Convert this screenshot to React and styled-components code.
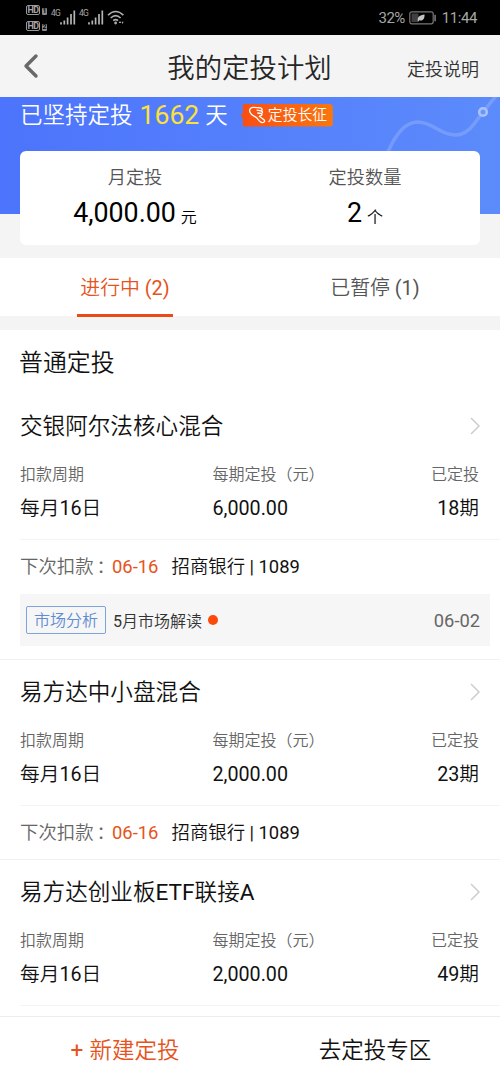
import React from "react";
import styled, { createGlobalStyle } from "styled-components";

const plans = [
    {
        name  : "交银阿尔法核心混合",
        amount: "6,000.00",
        count : "18期",
        next  : "06-16",
        news  : { tag: "市场分析", title: "5月市场解读", date: "06-02" }
    },
    {
        name  : "易方达中小盘混合",
        amount: "2,000.00",
        count : "23期",
        next  : "06-16"
    },
    {
        name  : "易方达创业板ETF联接A",
        amount: "2,000.00",
        count : "49期"
    }
];

export default function App() {

    return(
        <Page>
            <GlobalStyle/>
            <StatusBar/>

            <Header>
                <BackIcon viewBox="0 0 16 26">
                    <path d="M13 3 L3 13 L13 23"/>
                </BackIcon>
                <HeaderTitle>我的定投计划</HeaderTitle>
                <HeaderLink>定投说明</HeaderLink>
            </Header>

            <Summary/>

            <Tabs>
                <Tab><TabLabel $active>进行中 <Latin>(2)</Latin></TabLabel></Tab>
                <Tab><TabLabel>已暂停 <Latin>(1)</Latin></TabLabel></Tab>
            </Tabs>

            <PlanList>
                <SectionTitle>普通定投</SectionTitle>
                {plans.map(plan => <Plan key={plan.name} plan={plan}/>)}
            </PlanList>

            <BottomBar>
                <BottomButton $primary><Plus>+</Plus>新建定投</BottomButton>
                <BottomButton>去定投专区</BottomButton>
            </BottomBar>
        </Page>
    )
}

function StatusBar() {
    return(
        <StatusWrapper>
            <HdStack>
                <HdRow><HdBox>HD</HdBox><HdNumber>1</HdNumber></HdRow>
                <HdRow><HdBox>HD</HdBox><HdNumber>2</HdNumber></HdRow>
            </HdStack>
            <Signal/>
            <Signal/>
            <WifiIcon viewBox="0 0 18 15">
                <path d="M1 5.2 Q8.6 -2.2 16.4 5.2"/>
                <path d="M3.7 8 Q8.6 3.2 13.6 8"/>
                <path d="M6.2 10.7 Q8.6 8.4 11 10.7"/>
                <circle cx="8.6" cy="13" r="1.4"/>
                <path className="arrow" d="M13 11 l-1.3 2 h2.6z M15.6 14 l-1 -2.2 h2z"/>
            </WifiIcon>

            <StatusRight>
                <Percent>32%</Percent>
                <BatteryIcon viewBox="0 0 28 14">
                    <rect className="frame" x="0.8" y="0.8" width="23.4" height="12" rx="2"/>
                    <rect className="level" x="2.5" y="2.5" width="7" height="8.6"/>
                    <path className="leaf" d="M9 10.5 C7.5 6 11 4 15.5 3.4 C16 8 13 10.5 10.2 9.3 L8.6 11.2z"/>
                    <rect className="cap" x="25.3" y="3.8" width="1.6" height="6.5"/>
                </BatteryIcon>
                <Clock>11:44</Clock>
            </StatusRight>
        </StatusWrapper>
    )
}

function Signal() {
    return(
        <SignalWrapper>
            <SignalLabel>4G</SignalLabel>
            <SignalBars viewBox="0 0 16 15">
                <path d="M1 12.3 V14.5 M4.3 10.5 V14.5 M7.6 7.5 V14.5 M11 4 V14.5 M14.3 0.5 V14.5"/>
            </SignalBars>
        </SignalWrapper>
    )
}

function Summary() {
    return(
        <SummaryWrapper>
            <Wave viewBox="0 0 120 60">
                <path d="M8 55 C16 36 26 25 38 25 C53 25 60 38 75 38 C90 38 96 23 103 15 L116 -1"/>
                <circle cx="103" cy="15" r="3.8"/>
            </Wave>
            <Banner>
                已坚持定投
                <Days>1662</Days>
                天
                <Badge>
                    <ShoeIcon viewBox="0 0 19 18">
                        <path d="M2 6.2 C0.6 3 3.2 1 6.2 1.4 C8.5 1.8 10.5 1.2 12.6 1.9 C14.6 2.8 14.6 4.4 13.2 4.9 C15 5.6 15 7 13.3 7.5 C14.5 8.6 14 9.8 12.2 9.9 L11.3 10.3 L16.3 14 C17.3 16 15 17.3 12.9 16.2 C10.6 15 9.8 12.6 8 11.3 C6.2 10 3.2 9.3 2 6.2z"/>
                        <path d="M8.6 4.2 L13.2 4.9 M9.3 7 L13.3 7.5"/>
                    </ShoeIcon>
                    定投长征
                </Badge>
            </Banner>
            <SummaryCard>
                <Stat>
                    <StatLabel>月定投</StatLabel>
                    <StatValue>4,000.00<Unit>元</Unit></StatValue>
                </Stat>
                <Stat>
                    <StatLabel>定投数量</StatLabel>
                    <StatValue>2<Unit>个</Unit></StatValue>
                </Stat>
            </SummaryCard>
        </SummaryWrapper>
    )
}

/* digits and latin letters are one step heavier than the Chinese text */
function Mixed({ text }) {
    return text.split(/([\x21-\x7e]+)/).map((part, i) =>
        i % 2 ? <Latin key={i}>{part}</Latin> : part
    )
}

function Plan({ plan }) {
    return(
        <PlanWrapper>
            <PlanHead>
                <PlanName><Mixed text={plan.name}/></PlanName>
                <ChevronIcon viewBox="0 0 10 18">
                    <path d="M1 1 L9 9 L1 17"/>
                </ChevronIcon>
            </PlanHead>
            <PlanGrid>
                <Label>扣款周期</Label>
                <Label>每期定投（元）</Label>
                <Label $right>已定投</Label>
                <Value><Mixed text="每月16日"/></Value>
                <Value><Mixed text={plan.amount}/></Value>
                <Value $right><Mixed text={plan.count}/></Value>
            </PlanGrid>
            {plan.next &&
                <NextRow>
                    <NextLabel>下次扣款<Colon>：</Colon></NextLabel>
                    <NextDate>{plan.next}</NextDate>
                    <span><Mixed text="招商银行 | 1089"/></span>
                </NextRow>
            }
            {plan.news &&
                <News>
                    <NewsTag>{plan.news.tag}</NewsTag>
                    <span><Mixed text={plan.news.title}/></span>
                    <Dot/>
                    <NewsDate>{plan.news.date}</NewsDate>
                </News>
            }
        </PlanWrapper>
    )
}

const GlobalStyle = createGlobalStyle`
    * {
        box-sizing: border-box;
    }

    body {
        margin      : 0;
        background  : #F4F4F4;
        font-family : Roboto, "Noto Sans CJK SC", sans-serif;
        font-weight : 350;
    }
`;

const Page = styled.div`
    display         : flex;
    flex-direction  : column;
    width       : 500px;
    height      : 1083px;
    overflow    : hidden;
    background  : #F4F4F4;
    color       : #111;
    white-space : nowrap;
`;

const Latin = styled.span`
    font-weight: 400;
`;

const StatusWrapper = styled.div`
    display     : flex;
    align-items : center;
    flex        : none;
    height      : 35px;
    padding     : 0 23px 0 26px;
    background  : #000;
    color       : #A6A6A6;
    font-weight : 400;
`;

const HdStack = styled.div`
    display         : flex;
    flex-direction  : column;
    gap         : 6px;
    width       : 25px;
    margin-top  : 1px;
`;

const HdRow = styled.div`
    display     : flex;
    align-items : flex-end;
    gap         : 2px;
`;

const HdBox = styled.div`
    display     : flex;
    justify-content: center;
    width       : 14px;
    height      : 10px;
    border      : 1px solid #999;
    border-radius: 2px;
    font-size   : 9px;
    font-weight : 700;
    line-height : 8.5px;
    letter-spacing: -0.5px;
`;

const HdNumber = styled.div`
    width       : 5px;
    height      : 7px;
    border-radius: 1px;
    background  : #8A8A8A;
    color       : #000;
    font-size   : 7px;
    font-weight : 700;
    line-height : 7.5px;
    text-align  : center;
`;

const SignalWrapper = styled.div`
    display : flex;
    width   : 28px;
    height  : 15px;
`;

const SignalLabel = styled.div`
    width       : 9px;
    margin-top  : -1px;
    font-size   : 8.5px;
    line-height : 9px;
    letter-spacing: -0.7px;
`;

const SignalBars = styled.svg`
    width   : 16px;
    height  : 15px;

    path {
        stroke      : #B4B4B4;
        stroke-width: 1.7;
    }
`;

const WifiIcon = styled.svg`
    width   : 18px;
    height  : 15px;

    path {
        fill    : none;
        stroke  : #ADADAD;
        stroke-width: 1.6;
    }

    circle, .arrow {
        fill    : #ADADAD;
        stroke  : none;
    }
`;

const StatusRight = styled.div`
    display     : flex;
    align-items : center;
    margin-left : auto;
    font-size   : 15px;
    line-height : 20px;
`;

const Percent = styled.span`
    letter-spacing: -0.6px;
`;

const Clock = styled.span`
    letter-spacing: -0.4px;
`;

const BatteryIcon = styled.svg`
    width   : 28px;
    height  : 14px;
    margin  : 0 5px 0 4px;

    .frame {
        fill    : none;
        stroke  : #777;
        stroke-width: 1.2;
    }

    .level {
        fill: #3F3F3F;
    }

    .leaf {
        fill: #C4C4C4;
    }

    .cap {
        fill: #777;
    }
`;

const Header = styled.div`
    display     : grid;
    grid-template-columns: 98px 1fr 99px;
    align-items : center;
    flex        : none;
    height      : 62px;
    padding     : 0 21px 0 23px;
`;

const BackIcon = styled.svg`
    width   : 16px;
    height  : 26px;

    path {
        fill    : none;
        stroke  : #686868;
        stroke-width: 3.4;
        stroke-linecap: round;
        stroke-linejoin: round;
    }
`;

const HeaderTitle = styled.div`
    padding-top : 5px;
    padding-right: 2px;
    color       : #262626;
    font-size   : 27.4px;
    line-height : 40px;
    text-align  : center;
`;

const HeaderLink = styled.div`
    padding-top : 4px;
    color       : #333;
    font-size   : 18px;
    text-align  : right;
`;

const SummaryWrapper = styled.div`
    position    : relative;
    flex        : none;
    height      : 161px;
    padding     : 0 20px;
    background  : linear-gradient(to right, #4C74FC, #5C8BFB) 0 0 / 100% 117px no-repeat;
`;

/* decorative line behind the card */
const Wave = styled.svg`
    position: absolute;
    top     : 0;
    right   : 0;
    width   : 120px;
    height  : 60px;

    path {
        fill    : none;
        stroke  : rgba(255, 255, 255, 0.17);
        stroke-width: 3.5;
    }

    circle {
        fill    : #6A97FC;
        stroke  : #A9C4FD;
        stroke-width: 2.6;
    }
`;

const Banner = styled.div`
    position    : relative;
    display     : flex;
    align-items : center;
    height      : 36px;
    margin-bottom: 18px;
    color       : #FFF;
    font-size   : 22.5px;
    line-height : 36px;
`;

const Days = styled.span`
    margin      : 0 6px 0 7px;
    color       : #FBE13C;
    font-size   : 26.6px;
    font-weight : 400;
`;

const Badge = styled.div`
    display     : flex;
    align-items : center;
    gap         : 1px;
    width       : 92px;
    height      : 23px;
    margin-left : 13px;
    padding-left: 7px;
    border-radius: 4px;
    background  : linear-gradient(to right, #F94E12, #F8770F);
    clip-path   : polygon(2px 0, 100% 0, 100% 100%, 2px 100%, 2px 15px, 0 12px, 2px 9px);
    font-size   : 14.8px;
    line-height : 23px;
`;

const ShoeIcon = styled.svg`
    flex    : none;
    width   : 19px;
    height  : 18px;

    path {
        fill    : none;
        stroke  : #FFF;
        stroke-width: 1.3;
        stroke-linejoin: round;
    }
`;

const SummaryCard = styled.div`
    position    : relative;
    display     : grid;
    grid-template-columns: 1fr 1fr;
    height      : 94px;
    border-radius: 6px;
    background  : #FFF;
`;

const Stat = styled.div`
    text-align  : center;
    padding-top : 13px;
`;

const StatLabel = styled.div`
    color       : #555;
    font-size   : 18.2px;
    line-height : 28px;
`;

const StatValue = styled.div`
    margin-top  : 3px;
    color       : #000;
    font-size   : 26.8px;
    font-weight : 400;
    line-height : 36px;
`;

const Unit = styled.span`
    position    : relative;
    top         : 1px;
    margin-left : 5px;
    font-size   : 16px;
    font-weight : 350;
`;

const Tabs = styled.div`
    display     : grid;
    grid-template-columns: 1fr 1fr;
    flex        : none;
    height      : 58px;
    background  : #FFF;
`;

const Tab = styled.div`
    display         : flex;
    justify-content : center;
`;

const TabLabel = styled.div`
    height      : 59px;
    padding     : 3px 3px 0;
    border-bottom: 3px solid ${props => props.$active ? "#EB4A17" : "transparent"};
    color       : ${props => props.$active ? "#E65320" : "#555"};
    font-size   : 19.9px;
    line-height : 56px;
`;

const PlanList = styled.div`
    flex        : 1;
    min-height  : 0;
    margin-top  : 14px;
    overflow    : hidden;
    background  : #FFF;
`;

const SectionTitle = styled.div`
    height      : 64px;
    padding     : 1px 19px 0;
    font-size   : 23.9px;
    line-height : 64px;
`;

const PlanWrapper = styled.div`
    padding-left: 20px;
    border-bottom: 1px solid #F1F1F1;

    &:last-child {
        border-bottom: none;
    }
`;

const PlanHead = styled.div`
    display     : flex;
    align-items : center;
    justify-content: space-between;
    height      : 64px;
    padding-right: 20px;
`;

const PlanName = styled.div`
    padding-top : 2px;
    font-size   : 22.6px;
    line-height : 62px;
`;

const ChevronIcon = styled.svg`
    width   : 10px;
    height  : 18px;
    margin-bottom: 1px;

    path {
        fill    : none;
        stroke  : #CCC;
        stroke-width: 1.5;
    }
`;

const PlanGrid = styled.div`
    display     : grid;
    grid-template-columns: 192.5px 1fr 90px;
    grid-template-rows: 34px 34px;
    height      : 82px;
    padding-right: 21px;
    border-bottom: 1px solid #F4F4F4;
`;

const Label = styled.div`
    color       : #666;
    font-size   : 16px;
    line-height : 34px;
    text-align  : ${props => props.$right ? "right" : "left"};
`;

const Value = styled.div`
    font-size   : 19.7px;
    line-height : 34px;
    text-align  : ${props => props.$right ? "right" : "left"};
`;

const NextRow = styled.div`
    display     : flex;
    height      : 53px;
    font-size   : 18.4px;
    line-height : 54px;
`;

const NextLabel = styled.span`
    width       : 92px;
    color       : #666;
`;

const Colon = styled.span`
    margin-left: 3px;
`;

const NextDate = styled.span`
    width       : 59.5px;
    color       : #E65320;
    font-weight : 400;
`;

const News = styled.div`
    display     : flex;
    align-items : center;
    height      : 52px;
    margin      : 1px 10px 13px 0;
    padding     : 0 10px 0 6px;
    background  : #F6F6F6;
    color       : #333;
    font-size   : 16px;
`;

const NewsTag = styled.div`
    width       : 80px;
    height      : 28px;
    margin-right: 7px;
    border      : 1px solid #7FA3DD;
    border-radius: 2px;
    color       : #5F8CD4;
    line-height : 27px;
    text-align  : center;
`;

const Dot = styled.div`
    width       : 10px;
    height      : 10px;
    margin-left : 6px;
    border-radius: 50%;
    background  : #FB4A0B;
`;

const NewsDate = styled.div`
    margin-left : auto;
    color       : #666;
    font-size   : 18.3px;
    font-weight : 400;
`;

const BottomBar = styled.div`
    display     : grid;
    grid-template-columns: 1fr 1fr;
    flex        : none;
    height      : 67px;
    border-top  : 1px solid #EDEDED;
    background  : #FFF;
`;

const BottomButton = styled.div`
    color       : ${props => props.$primary ? "#E65320" : "#111"};
    font-size   : 22.5px;
    line-height : 66px;
    text-align  : center;
`;

const Plus = styled.span`
    margin-right: 6px;
    font-weight : 400;
`;
